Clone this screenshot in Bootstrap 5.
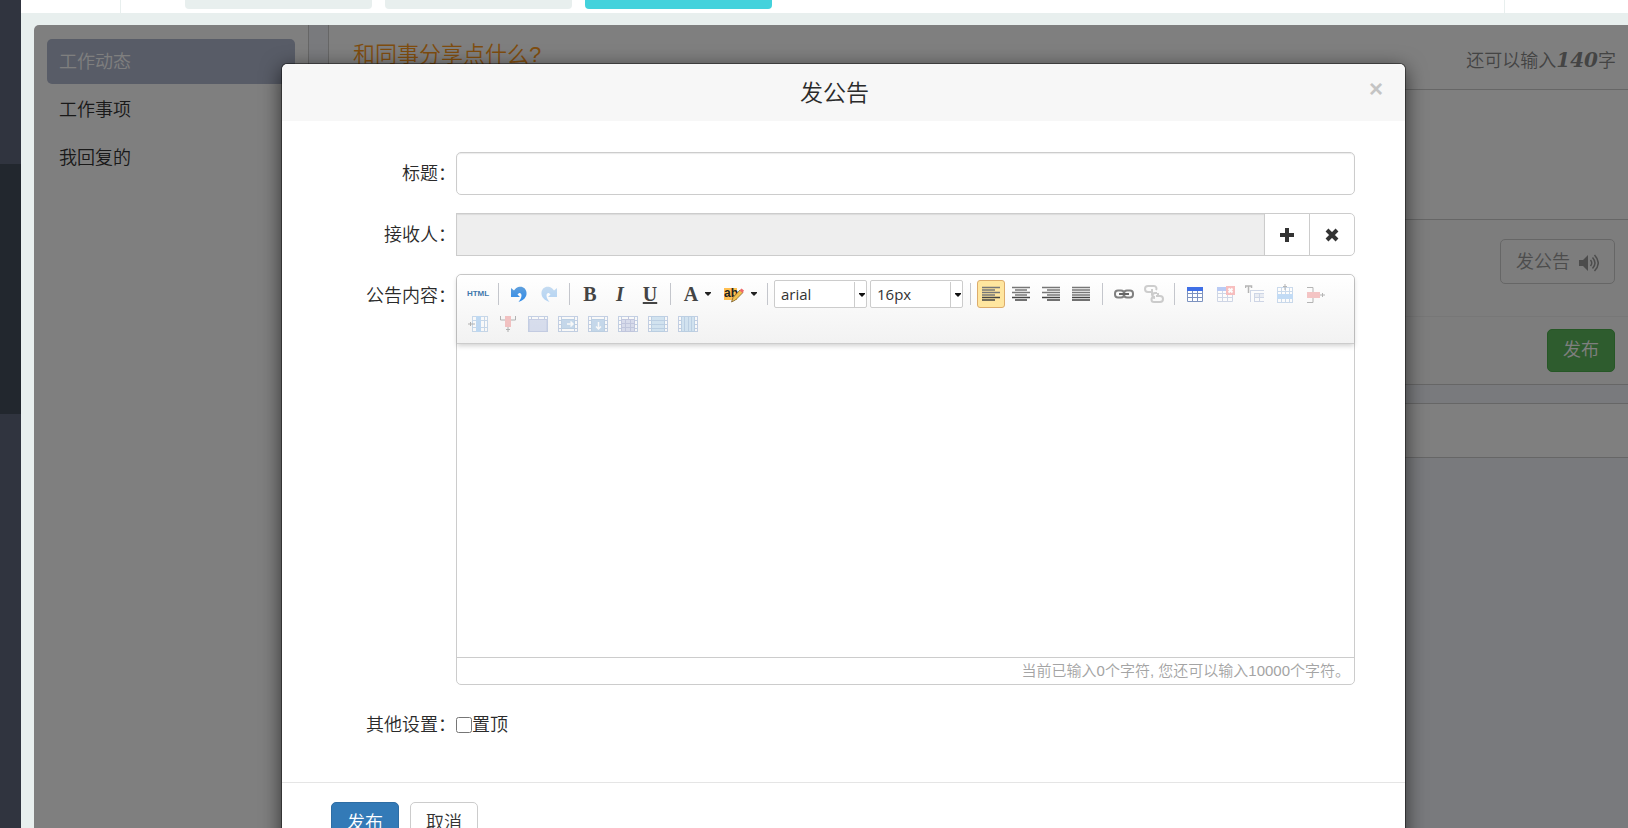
<!DOCTYPE html>
<html lang="zh-CN">
<head>
<meta charset="utf-8">
<meta name="viewport" content="width=device-width, initial-scale=1">
<title>发公告</title>
<link href="https://cdn.jsdelivr.net/npm/bootstrap@5.3.0/dist/css/bootstrap.min.css" rel="stylesheet">
<style>
  body { font-family: "Liberation Sans", "Noto Sans CJK SC", sans-serif; font-size: 18px; font-weight: 350; color: #2a2a2a; background: #e8efee; }
  .btn, .form-control { font-size: 18px; font-weight: 350; border-radius: 5px; }
  .shell { height: 100vh; }
  .icon-defs { position: absolute; width: 0; height: 0; }
  .rail { width: 21px; background: #30343f; padding-top: 164px; }
  .rail-active { height: 250px; background: #22272e; }
  .topbar { height: 13px; background: #fff; }
  .topbar-logo { width: 100px; border-right: 1px solid #e8efee; margin-right: 64px; }
  .topbar-user { width: 124px; border-left: 1px solid #e8efee; }
  .top-tab { width: 187px; height: 9px; margin-right: 13px; background: #e8efee; border-radius: 0 0 4px 4px; }
  .top-tab.current { background: #44d2dc; }
  .workspace { margin: 12px 0 0 13px; background: #f3f5fb; border-radius: 5px 0 0 0; }
  .side { width: 275px; padding: 14px 13px; background: #fff; border-right: 1px solid #ccc; }
  .side a { display: block; padding: 1px 12px 0; line-height: 44px; margin-bottom: 3px; color: #333; text-decoration: none; border-radius: 5px; }
  .side a.current { background: #b0b8ce; color: #fff; }
  .feed { margin-left: 19px; }
  .post-box { background: #fff; border: solid #ccc; border-width: 0 0 1px 1px; }
  .post-head { height: 65px; padding: 0 12px 0 24px; border-bottom: 1px solid #ccc; }
  .slogan { color: #ff9b1e; font-size: 22px; font-weight: 350; line-height: 60px; }
  .remain { color: #888; line-height: 72px; }
  .remain em { font: italic bold 20px "DejaVu Serif", serif; }
  .post-text { height: 129px; border: 0; resize: none; }
  .post-tools { height: 98px; padding: 19px 13px; background: #fafafa; border: solid #ccc; border-width: 1px 0; border-bottom-color: #eee; }
  .post-tools .btn { height: 45px; padding: 2px 15px 0; border: 1px solid #ccc; color: #999; }
  .post-send { padding: 12px 13px; background: #fafafa; }
  .post-send .btn { height: 43px; padding: 0 15px; background: #5cb85c; border: 1px solid #4cae4c; color: #fff; }
  .feed-tabs { height: 55px; margin-top: 18px; background: #fff; border: solid #ccc; border-width: 1px 0 1px 1px; }
  .veil { position: absolute; inset: 0; padding: 38px 0 0 25px; background: rgba(0,0,0,.5); overflow: hidden; }
  .dialog { width: 100%; max-width: 1125px; margin: 0 auto; background: #fff; background-clip: padding-box; border: 1px solid rgba(0,0,0,.4); border-radius: 6px; box-shadow: 0 5px 20px rgba(0,0,0,.6); }
  .dialog-head { padding: 0 20px; height: 57px; background: #f7f7f7; border-radius: 6px 6px 0 0; }
  .dialog-head h4 { font-size: 23px; font-weight: 350; line-height: 58px; }
  .close-x { border: 0; background: none; padding: 0; width: 18px; line-height: 49px; font-size: 24px; font-weight: 700; color: #c4c4c4; }
  .dialog-body { padding: 31px 50px 36px 0; }
  .form-line { margin-bottom: 18px; }
  .form-line > label, .form-line > .name { width: 174px; flex: none; padding-top: 1px; text-align: right; line-height: 42px; }
  .form-line > .w-auto { text-align: left; }
  .form-control { height: 43px; border: 1px solid #ccc; box-shadow: inset 0 1px 1px rgba(0,0,0,.08); }
  .receiver { background: #eee !important; border-radius: 0; }
  .input-group .btn { width: 46px; padding: 0; border: 1px solid #ccc; background: #fff; color: #333; }
  .editor { border: 1px solid #ccc; border-radius: 5px; min-width: 0; }
  .tools { padding: 4px 6px; border-bottom: 1px solid #ccc; border-radius: 5px 5px 0 0; background: linear-gradient(#fff, #f2f2f2); box-shadow: 0 2px 5px rgba(0,0,0,.18); }
  .tools button { width: 30px; height: 30px; padding: 0; border: 0; background: none; font: bold 20px/30px "Liberation Serif", serif; color: #444; display: flex; align-items: center; justify-content: center; border-radius: 3px; }
  .tools button.html-src { font: bold 8px/30px "Liberation Sans", sans-serif; color: #3f78ac; }
  .tools button.drop { width: 43px; gap: 7px; }
  .tools button.on { width: 28px; height: 28px; margin: 1px; background: #ffe69f; border: 1px solid #dcac6c; }
  .tools svg { width: 20px; height: 20px; flex: none; }
  .tools svg.caret { width: 6px; height: 4px; }
  .tools .off { opacity: .35; }
  .tools .split { width: 1px; height: 22px; margin: 4px 5px; background: #c4c6cc; }
  .tools .split.wide { margin: 4px 6px; }
  .tools select { width: 93px; height: 28px; margin: 1px 2px 1px 1px; padding: 0 0 0 6px; border: 1px solid #ccc; border-radius: 2px; appearance: none; font: 15px "Open Sans", sans-serif; color: #333;
    background: #fff url("data:image/svg+xml,%3Csvg xmlns='http://www.w3.org/2000/svg' width='12' height='26'%3E%3Cpath d='M.5 1v25' stroke='%23ccc'/%3E%3Cpath d='M5 12h6v1l-3 3-3-3z' fill='%23111'/%3E%3C/svg%3E") no-repeat right 0 top 0; }
  .writing { display: block; width: 100%; height: 313px; border: 0; resize: none; }
  .count { border-top: 1px solid #ccc; padding-right: 4px; font-size: 15px; line-height: 26px; color: #a4a4a4; text-align: right; }
  .pin { width: 16px; height: 16px; margin: 0; flex: none; }
  .dialog-foot { border-top: 1px solid #e5e5e5; padding: 19px 49px; gap: 11px; }
  .dialog-foot .btn { height: 43px; padding: 0 15px; border: 1px solid #ccc; background: #fff; color: #333; }
  .dialog-foot .btn.send { background: #337ab7; border-color: #2e6da4; color: #fff; }
</style>
<script src="https://cdn.jsdelivr.net/npm/bootstrap@5.3.0/dist/js/bootstrap.bundle.min.js"></script>
</head>
<body>
<svg class="icon-defs" aria-hidden="true">
  <defs>
    <linearGradient id="blue" x1="0" y1="0" x2="0" y2="1"><stop offset="0" stop-color="#5f9fdc"/><stop offset="1" stop-color="#2f8bea"/></linearGradient>
  </defs>
  <symbol id="undo" viewBox="0 0 20 20"><path fill="url(#blue)" d="M2 4v9h9L8.500 10.500C10 8 12.500 8.500 12.500 11.500c0 2.500-1.500 4.500-3 6.500 5-1.500 8.500-5 8-9.500C17 3.500 12 .8 7 4.200 6 5 5.500 5.700 5 6.500z"/></symbol>
  <symbol id="caret" viewBox="0 0 6 4"><path d="M0 0h6v1L3 4 0 1z" fill="#222"/></symbol>
  <symbol id="link" viewBox="0 0 20 20"><g fill="none" stroke="#808080" stroke-width="2"><rect x="1" y="6.500" width="9" height="7" rx="3"/><rect x="10" y="6.500" width="9" height="7" rx="3"/></g><path d="M5 10h10" stroke="#666" stroke-width="2"/></symbol>
  <symbol id="unlink" viewBox="0 0 20 20"><g fill="none" stroke="#777" stroke-width="2"><path d="M8 8H4a2.500 2.500 0 010-6h6a2.500 2.500 0 012 4M8 5v6a3 3 0 003 2M13 9h-2a2 2 0 000 5"/><path d="M12 12h4a3 3 0 010 6h-6a2.500 2.500 0 010-5M14 12V9"/></g></symbol>
  <symbol id="tbl" viewBox="0 0 20 20"><path fill="#fff" d="M2 3h16v15H2z"/><path fill="none" stroke="#7d93c0" d="M2.500 3v14.500h15V3M2 9.500h16M2 13.500h16M7.500 6v12M12.500 6v12"/><path fill="#3f6fe6" d="M2 3h16v4H2z"/></symbol>
  <symbol id="tblx" viewBox="0 0 20 20"><use href="#tbl"/><path fill="#ef4d4d" d="M11 2h9v9h-9z"/><path d="M13.500 4.500l4 4m0-4l-4 4" stroke="#fff" stroke-width="2"/></symbol>
  <symbol id="tblt" viewBox="0 0 20 20"><path d="M.5 4V2h6v2M3.500 2v7" fill="none" stroke="#333" stroke-width="1.500"/><path d="M5 6.500h14M5.500 6v12M9.500 9v9M9 9.500h10M9 13.500h10M9 17.500h10M14.500 9v9" fill="none" stroke="#7d93c0"/><path fill="#7d93c0" opacity=".4" d="M10 10h9v3h-9z"/></symbol>
  <symbol id="grid" viewBox="0 0 20 20"><path fill="#fff" d="M2 3h16v16H2z"/><path d="M2 3.500h16M2 7.500h16M2 14.500h16M2 18.500h16M2.500 3v16M6.500 3v16M10.500 3v16M14.500 3v16M17.500 3v16" fill="none" stroke="#6f9ccf"/></symbol>
  <symbol id="rowin" viewBox="0 0 20 20"><use href="#grid"/><path fill="#5aa2ea" d="M2 10h16v5H2z"/><path d="M10 0v6M8 2.500h4" stroke="#333"/></symbol>
  <symbol id="rowdel" viewBox="0 0 20 20"><path d="M2 3.500h6V8M2 18.500h6V14" fill="none" stroke="#333"/><path fill="#e86060" d="M2 8h13v6H2z"/><path d="M15 11h5M17.500 9v4" stroke="#333"/></symbol>
  <symbol id="colin" viewBox="0 0 20 20"><g transform="translate(2 -1)"><use href="#grid"/></g><path fill="#5aa2ea" d="M8 2h5v16H8z"/><path d="M0 10h7M2.500 8v4" stroke="#333"/></symbol>
  <symbol id="coldel" viewBox="0 0 20 20"><path d="M2.500 2v4H7M17.500 2v4H13" fill="none" stroke="#333"/><path fill="#e86060" d="M7 2h6v11H7z"/><path d="M10 13v5M8 15.500h4" stroke="#333"/></symbol>
  <symbol id="frame" viewBox="0 0 20 20"><path fill="#fff" d="M0 2h20v16H0z"/><path d="M.5 2v16M19.500 2v16M0 2.500h20M0 17.500h20M3.500 2v16M16.500 2v16M0 6.500h3M17 6.500h3M0 10.500h3M17 10.500h3M0 14.500h3M17 14.500h3" fill="none" stroke="#6488c0"/></symbol>
  <symbol id="merge" viewBox="0 0 20 20"><use href="#frame"/><path d="M1 5.500h18v12H1z" fill="#9fb0dc" stroke="#6a80c0"/><path d="M10.500 2v3" stroke="#7b90c8"/></symbol>
  <symbol id="mergeR" viewBox="0 0 20 20"><use href="#frame"/><path d="M3.500 5.500h13v9h-13z" fill="#6ba0d4" stroke="#5288c0"/><path d="M9 10h6M12.500 7.500L15 10l-2.500 2.500" fill="none" stroke="#fff" stroke-width="1.500"/></symbol>
  <symbol id="mergeD" viewBox="0 0 20 20"><use href="#frame"/><path d="M3.500 5.500h13v12h-13z" fill="#6ba0d4" stroke="#5288c0"/><path d="M10.500 8v7M8 12.500l2.500 2.500 2.500-2.500" fill="none" stroke="#fff" stroke-width="1.500"/></symbol>
  <symbol id="cells" viewBox="0 0 20 20"><use href="#frame"/><path d="M3.500 5.500h13v12h-13zM10.500 2v3M3 9.500h14M3 13.500h14M7.500 6v12M12.500 6v12" fill="#a0acd8" stroke="#6070b0"/></symbol>
  <symbol id="rows" viewBox="0 0 20 20"><use href="#frame"/><path d="M3.500 2.500h13v15h-13zM3 6.500h14M3 10.500h14M3 14.500h14" fill="#8fbfe4" stroke="#5088c0"/></symbol>
  <symbol id="cols" viewBox="0 0 20 20"><use href="#frame"/><path d="M3.500 2.500h13v15h-13zM6.500 3v15M10.500 3v15M13.500 3v15" fill="#8fbfe4" stroke="#5088c0"/></symbol>
</svg>

<div class="shell d-flex overflow-hidden">
  <aside class="rail flex-shrink-0"><div class="rail-active"></div></aside>
  <div class="flex-grow-1 d-flex flex-column">
    <header class="topbar d-flex flex-shrink-0">
      <div class="topbar-logo"></div>
      <div class="top-tab"></div><div class="top-tab"></div><div class="top-tab current"></div>
      <div class="topbar-user ms-auto"></div>
    </header>

    <div class="workspace position-relative flex-grow-1 d-flex overflow-hidden">
      <nav class="side flex-shrink-0">
        <a class="current" href="#">工作动态</a>
        <a href="#">工作事项</a>
        <a href="#">我回复的</a>
      </nav>
      <main class="feed flex-grow-1">
        <section class="post-box">
          <div class="post-head d-flex justify-content-between">
            <span class="slogan">和同事分享点什么?</span>
            <span class="remain">还可以输入<em>140</em>字</span>
          </div>
          <textarea class="post-text d-block w-100" aria-label="分享内容"></textarea>
          <div class="post-tools text-end">
            <button class="btn" type="button">发公告
              <svg class="ms-1" width="20" height="18" viewBox="0 0 20 18"><path fill="#999" d="M0 6h4l5-5v16l-5-5H0z"/><path d="M11.500 6q2.500 3 0 6M13.500 3.500q5 5.500 0 11M15.500 1q7.500 8 0 16" fill="none" stroke="#999" stroke-width="1.500"/></svg>
            </button>
          </div>
          <div class="post-send text-end"><button class="btn" type="button">发布</button></div>
        </section>
        <section class="feed-tabs"></section>
      </main>

      <div class="veil">
        <form class="dialog" role="dialog" aria-labelledby="dlgTitle">
          <div class="dialog-head d-flex align-items-start">
            <h4 class="m-0 flex-grow-1 text-center" id="dlgTitle">发公告</h4>
            <button class="close-x" type="button" aria-label="关闭">×</button>
          </div>
          <div class="dialog-body">
            <div class="form-line d-flex">
              <label for="title">标题：</label>
              <input class="form-control" id="title" type="text">
            </div>
            <div class="form-line d-flex">
              <label for="receiver">接收人：</label>
              <div class="input-group">
                <input class="form-control receiver" id="receiver" type="text" readonly>
                <button class="btn" type="button" aria-label="添加"><svg width="14" height="14" viewBox="0 0 14 14"><path d="M7 0v14M0 7h14" stroke="#333" stroke-width="4"/></svg></button>
                <button class="btn" type="button" aria-label="清除"><svg width="14" height="14" viewBox="0 0 14 14"><path d="M2 2l10 10M12 2L2 12" stroke="#333" stroke-width="4"/></svg></button>
              </div>
            </div>
            <div class="form-line d-flex">
              <label for="content">公告内容：</label>
              <div class="editor flex-grow-1">
                <div class="tools d-flex flex-wrap position-relative">
                  <button class="html-src" type="button">HTML</button>
                  <span class="split"></span>
                  <button type="button" aria-label="撤销"><svg><use href="#undo"/></svg></button>
                  <button type="button" aria-label="重做"><svg class="off" viewBox="0 0 20 20"><g transform="matrix(-1 0 0 1 20 0)"><use href="#undo" width="20" height="20"/></g></svg></button>
                  <span class="split"></span>
                  <button type="button">B</button>
                  <button type="button"><i>I</i></button>
                  <button type="button"><u>U</u></button>
                  <span class="split"></span>
                  <button class="drop" type="button">A<svg class="caret"><use href="#caret"/></svg></button>
                  <button class="drop" type="button" aria-label="背景色"><svg viewBox="0 0 20 20"><path fill="#ffbf52" d="M0 4h13v12H0z"/><text x="0" y="13" font-family="Liberation Sans, sans-serif" font-size="12" font-weight="700" fill="#222">ab</text><path d="M9 13.500L16 6l3 2.500-7.500 7.500L7.500 18z" fill="#f2c14e" stroke="#7b6130" stroke-width=".8"/><path d="M15.500 6.500L17.500 4.500l2.500 2L18.500 9z" fill="#ef6a6a"/></svg><svg class="caret"><use href="#caret"/></svg></button>
                  <span class="split"></span>
                  <select aria-label="字体"><option>arial</option></select>
                  <select aria-label="字号"><option>16px</option></select>
                  <span class="split"></span>
                  <button class="on" type="button" aria-label="居左对齐"><svg viewBox="0 0 20 20"><path d="M1 3.500h18M1 6h13M1 8.500h18M1 11h13" stroke="#777" stroke-width="1.500"/><path d="M1 13.500h18M1 16h13" stroke="#444" stroke-width="1.500"/></svg></button>
                  <button type="button" aria-label="居中对齐"><svg viewBox="0 0 20 20"><path d="M1 3.500h18M4 6h12M1 8.500h18M4 11h12" stroke="#777" stroke-width="1.500"/><path d="M1 13.500h18M4 16h12" stroke="#444" stroke-width="1.500"/></svg></button>
                  <button type="button" aria-label="居右对齐"><svg viewBox="0 0 20 20"><path d="M1 3.500h18M6 6h13M1 8.500h18M6 11h13" stroke="#777" stroke-width="1.500"/><path d="M1 13.500h18M6 16h13" stroke="#444" stroke-width="1.500"/></svg></button>
                  <button type="button" aria-label="两端对齐"><svg viewBox="0 0 20 20"><path d="M1 3.500h18M1 6h18M1 8.500h18M1 11h18" stroke="#777" stroke-width="1.500"/><path d="M1 13.500h18M1 16h18" stroke="#444" stroke-width="1.500"/></svg></button>
                  <span class="split wide"></span>
                  <button type="button" aria-label="超链接"><svg><use href="#link"/></svg></button>
                  <button type="button" aria-label="取消链接"><svg class="off"><use href="#unlink"/></svg></button>
                  <span class="split"></span>
                  <button type="button" aria-label="插入表格"><svg><use href="#tbl"/></svg></button>
                  <button type="button" aria-label="删除表格"><svg class="off"><use href="#tblx"/></svg></button>
                  <button type="button" aria-label="表格前插入行"><svg class="off"><use href="#tblt"/></svg></button>
                  <button type="button" aria-label="前插入行"><svg class="off"><use href="#rowin"/></svg></button>
                  <button type="button" aria-label="删除行"><svg class="off"><use href="#rowdel"/></svg></button>
                  <button type="button" aria-label="前插入列"><svg class="off"><use href="#colin"/></svg></button>
                  <button type="button" aria-label="删除列"><svg class="off"><use href="#coldel"/></svg></button>
                  <button type="button" aria-label="合并单元格"><svg class="off"><use href="#merge"/></svg></button>
                  <button type="button" aria-label="右合并"><svg class="off"><use href="#mergeR"/></svg></button>
                  <button type="button" aria-label="下合并"><svg class="off"><use href="#mergeD"/></svg></button>
                  <button type="button" aria-label="完全拆分"><svg class="off"><use href="#cells"/></svg></button>
                  <button type="button" aria-label="拆分成行"><svg class="off"><use href="#rows"/></svg></button>
                  <button type="button" aria-label="拆分成列"><svg class="off"><use href="#cols"/></svg></button>
                </div>
                <textarea class="writing" id="content"></textarea>
                <div class="count">当前已输入0个字符, 您还可以输入10000个字符。</div>
              </div>
            </div>
            <div class="d-flex form-line mb-0 align-items-center">
              <span class="name">其他设置：</span>
              <input class="pin" id="pin" type="checkbox">
              <label class="w-auto" for="pin">置顶</label>
            </div>
          </div>
          <div class="dialog-foot d-flex">
            <button class="btn send" type="button">发布</button>
            <button class="btn" type="button">取消</button>
          </div>
        </form>
      </div>
    </div>
  </div>
</div>
</body>
</html>
